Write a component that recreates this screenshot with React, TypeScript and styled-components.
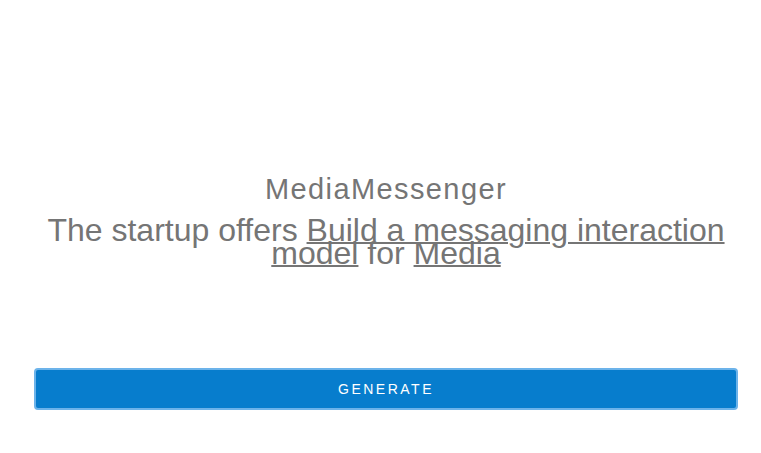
import styled, { createGlobalStyle } from 'styled-components'

const GlobalStyle = createGlobalStyle`
  html, body {
    margin: 0;
    padding: 0;
    background: #ffffff;
  }
`

const App = () => {
  return (
    <Page>
      <GlobalStyle />
      <Hero>
        <Title>MediaMessenger</Title>
        <Pitch>
          The startup offers <Link href="#">Build a messaging interaction model</Link> for{' '}
          <Link href="#">Media</Link>
        </Pitch>
      </Hero>
      <GenerateButton type="button">Generate</GenerateButton>
    </Page>
  )
}

export default App

const Page = styled.div`
  display: flex;
  flex-direction: column;
  height: 453px;
  box-sizing: border-box;
  padding: 174px 23px 0 34px;
  font-family: 'Liberation Sans', Arial, sans-serif;
`

const Hero = styled.div`
  display: flex;
  flex-direction: column;
  align-items: center;
  text-align: center;
  color: #757575;
`

const Title = styled.h1`
  margin: 0 0 15px;
  font-size: 29px;
  font-weight: 400;
  line-height: 30px;
  letter-spacing: 1.4px;
`

const Pitch = styled.p`
  margin: 0;
  font-size: 32px;
  line-height: 23px;
`

const Link = styled.a`
  color: inherit;
  text-decoration: underline;
  text-decoration-thickness: 2px;
`

const GenerateButton = styled.button`
  margin-top: 103px;
  height: 42px;
  width: 100%;
  border: 2px solid #6cb3ea;
  border-radius: 4px;
  background: #077dcd;
  color: #ffffff;
  font-family: 'Liberation Sans', Arial, sans-serif;
  font-size: 14px;
  letter-spacing: 2.5px;
  text-transform: uppercase;
  cursor: pointer;
`
